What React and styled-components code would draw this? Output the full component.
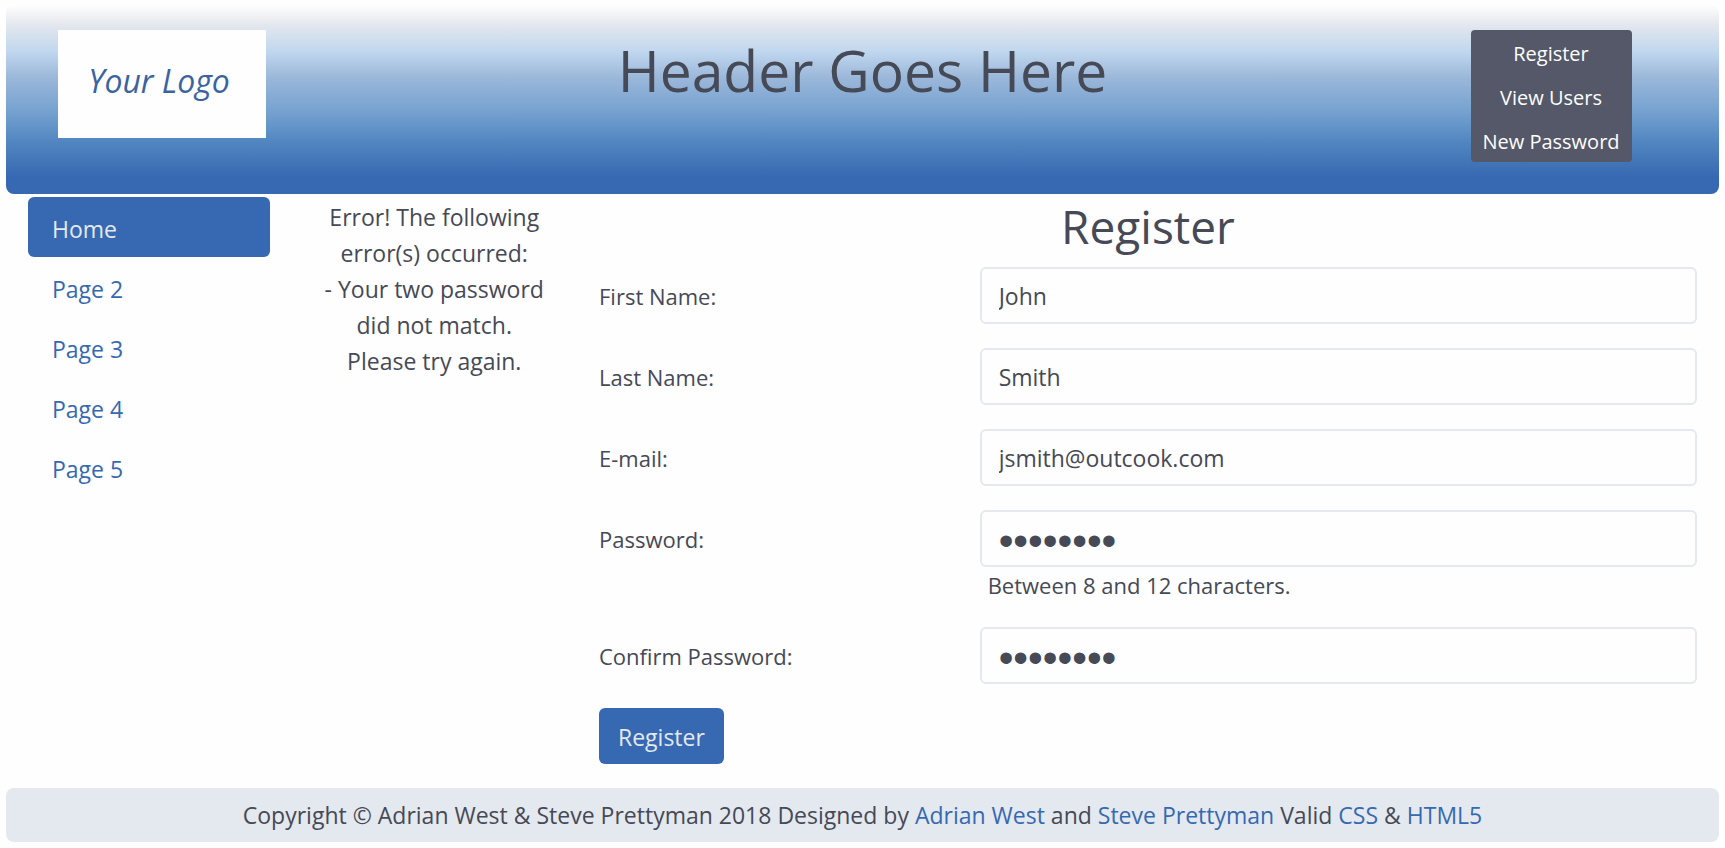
import React from "react";
import styled, { createGlobalStyle } from "styled-components";

const GlobalStyle = createGlobalStyle`
  *, *::before, *::after { box-sizing: border-box; }
  body {
    margin: 0;
    background: #fefefe;
    color: #464956;
    font-family: "Open Sans", "Noto Sans", sans-serif;
    font-size: 23px;
    line-height: 36px;
  }
  h1, h2, p { margin: 0; font-weight: 400; }
  a { color: #3669b1; text-decoration: none; }
`;

const Page = styled.div`
  padding: 5px 6px 6px;
`;

const Header = styled.header`
  display: grid;
  grid-template-columns: minmax(0, 1fr) minmax(0, 4fr) minmax(0, 1fr);
  align-items: start;
  min-height: 189px;
  padding-top: 25px;
  border-radius: 8px;
  background: linear-gradient(
    #fefefe 0%,
    #e5e8ee 10%,
    #bfd6ee 25%,
    #9cb8da 38%,
    #76a2d0 56%,
    #5185c0 73%,
    #3669b1 91%
  );
`;

const Logo = styled.div`
  display: flex;
  align-items: center;
  justify-content: center;
  width: 208px;
  height: 108px;
  margin-left: 52px;
  padding: 0 6px 6px 0;
  background: #fefefe;
  color: #3a64a0;
  font-size: 32px;
  font-style: italic;
`;

const Title = styled.h1`
  padding-top: 5px;
  font-size: 57px;
  line-height: 70px;
  text-align: center;
`;

const UserMenu = styled.nav`
  display: flex;
  flex-direction: column;
  width: 161px;
  margin-left: 37px;
  border-radius: 4px;
  background: #545868;
`;

const UserLink = styled.a`
  padding: 6px 0 2px;
  color: #fefefe;
  font-size: 20px;
  line-height: 36px;
  text-align: center;
`;

const Body = styled.div`
  display: grid;
  grid-template-columns: minmax(0, 1fr) minmax(0, 1fr) minmax(0, 4fr);
  padding-top: 3px;
`;

const SideNav = styled.nav`
  display: flex;
  flex-direction: column;
  padding: 0 22px;
`;

const SideLink = styled.a`
  padding: 14px 24px 10px;
  border-radius: 6px;
  background: ${(p) => (p.$active ? "#3669b1" : "transparent")};
  color: ${(p) => (p.$active ? "#e4e8ef" : "#3669b1")};
`;

const ErrorText = styled.p`
  padding: 2px 22px 0;
  text-align: center;
`;

const Form = styled.form`
  display: flex;
  flex-direction: column;
  gap: 24px;
`;

const FormTitle = styled.h2`
  margin-bottom: -12px;
  font-size: 46px;
  line-height: 58px;
  text-align: center;
`;

const Field = styled.div`
  display: grid;
  grid-template-columns: minmax(0, 1fr) minmax(0, 2fr);
  align-items: start;
`;

const Label = styled.label`
  padding: 11px 22px 10px;
  font-size: 22px;
`;

const Control = styled.div`
  display: flex;
  flex-direction: column;
  padding: 0 22px;
`;

const Input = styled.input`
  width: 100%;
  height: 57px;
  padding: 1px 17px 0;
  border: 2px solid #e4e8ef;
  border-radius: 6px;
  background: #fefefe;
  color: inherit;
  font: inherit;

  &[type="password"] {
    padding-top: 4px;
    font-family: "Liberation Sans", sans-serif;
    font-size: 42px;
  }
`;

const Hint = styled.small`
  padding: 0 8px;
  font-size: 22px;
`;

const Submit = styled.button`
  align-self: flex-start;
  height: 56px;
  margin-left: 22px;
  padding: 2px 19px 0;
  border: 0;
  border-radius: 6px;
  background: #3669b1;
  color: #e4e8ef;
  font: inherit;
`;

const Footer = styled.footer`
  margin-top: 24px;
  padding: 9px 22px;
  border-radius: 8px;
  background: #e4e8ef;
  text-align: center;
`;

const fields = [
  { id: "first_name", label: "First Name:", type: "text", value: "John" },
  { id: "last_name", label: "Last Name:", type: "text", value: "Smith" },
  { id: "email", label: "E-mail:", type: "email", value: "jsmith@outcook.com" },
  {
    id: "password1",
    label: "Password:",
    type: "password",
    value: "abcd1234",
    hint: "Between 8 and 12 characters.",
  },
  { id: "password2", label: "Confirm Password:", type: "password", value: "abcd1235" },
];

const pages = ["Home", "Page 2", "Page 3", "Page 4", "Page 5"];
const userLinks = ["Register", "View Users", "New Password"];

export default function App() {
  return (
    <>
      <GlobalStyle />
      <Page>
        <Header>
          <Logo>Your Logo</Logo>
          <Title>Header Goes Here</Title>
          <UserMenu aria-label="User">
            {userLinks.map((name) => (
              <UserLink key={name} href="#">{name}</UserLink>
            ))}
          </UserMenu>
        </Header>
        <Body>
          <SideNav aria-label="Pages">
            {pages.map((name, i) => (
              <SideLink key={name} href="#" $active={i === 0}>{name}</SideLink>
            ))}
          </SideNav>
          <ErrorText role="alert">
            Error! The following error(s) occurred:
            <br />- Your two password did not match.
            <br />Please try again.
          </ErrorText>
          <Form onSubmit={(e) => e.preventDefault()}>
            <FormTitle>Register</FormTitle>
            {fields.map((f) => (
              <Field key={f.id}>
                <Label htmlFor={f.id}>{f.label}</Label>
                <Control>
                  <Input id={f.id} name={f.id} type={f.type} defaultValue={f.value} />
                  {f.hint && <Hint>{f.hint}</Hint>}
                </Control>
              </Field>
            ))}
            <Submit type="submit">Register</Submit>
          </Form>
        </Body>
        <Footer>
          Copyright © Adrian West &amp; Steve Prettyman 2018 Designed by{" "}
          <a href="#">Adrian West</a> and <a href="#">Steve Prettyman</a> Valid{" "}
          <a href="#">CSS</a> &amp; <a href="#">HTML5</a>
        </Footer>
      </Page>
    </>
  );
}
